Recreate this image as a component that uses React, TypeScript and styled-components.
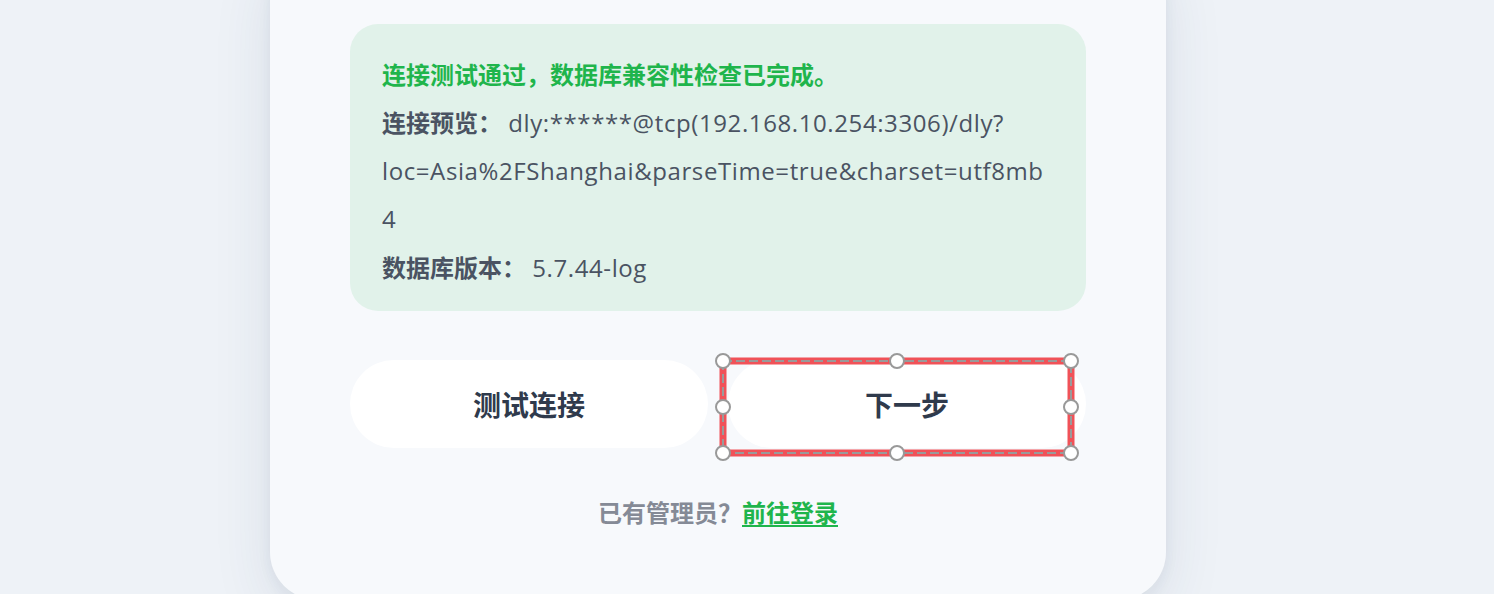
import React from "react";
import styled, { createGlobalStyle } from "styled-components";

const GlobalStyle = createGlobalStyle`
  :root {
    --page-bg: #eef2f7;
    --card-bg: #f7f9fc;
    --success-bg: #e1f2ea;
    --green: #1fb54c;
    --text: #4a5362;
    --heading: #2f3a4c;
    --muted: #858a96;
  }

  html, body {
    margin: 0;
    padding: 0;
    height: 100%;
    overflow: hidden;
    background: var(--page-bg);
  }

  body {
    font-family: "Open Sans", "Noto Sans CJK SC", sans-serif;
    color: var(--text);
  }
`;

const Page = styled.div`
  display: flex;
  justify-content: center;
  min-height: 100vh;
  padding-right: 58px;
`;

const Card = styled.div`
  position: relative;
  width: 896px;
  box-sizing: border-box;
  margin-top: -56px;
  padding: 80px 80px 72px;
  background: var(--card-bg);
  border-radius: 48px;
  box-shadow: 0 18px 60px rgba(40, 60, 100, 0.1), 0 4px 14px rgba(40, 60, 100, 0.06);
`;

const ResultBox = styled.div`
  background: var(--success-bg);
  border-radius: 28px;
  padding: 26px 32px 19px;
  font-size: 24px;
  line-height: 48px;
`;

const SuccessTitle = styled.div`
  color: var(--green);
  font-weight: 700;
  font-size: 24px;
  font-family: "Noto Sans CJK SC", sans-serif;
`;

const InfoRow = styled.div`
  overflow-wrap: anywhere;
`;

const Label = styled.span`
  font-family: "Noto Sans CJK SC", sans-serif;
  font-weight: 700;
  font-size: 24px;
`;

const Value = styled.span`
  font-family: "Open Sans", "Noto Sans CJK SC", sans-serif;
  font-size: 24px;
  letter-spacing: 0.6px;
`;

const Actions = styled.div`
  position: relative;
  display: grid;
  grid-template-columns: 1fr 1fr;
  gap: 20px;
  margin-top: 49px;
`;

const ActionButton = styled.button`
  height: 88px;
  border: none;
  border-radius: 44px;
  background: #ffffff;
  color: var(--heading);
  font-family: "Noto Sans CJK SC", sans-serif;
  font-size: 28px;
  font-weight: 700;
  cursor: pointer;
`;

const Selection = styled.svg`
  position: absolute;
  left: 363px;
  top: -9px;
  width: 368px;
  height: 112px;
  overflow: visible;
  pointer-events: none;
`;

const Footer = styled.p`
  margin: 48px 0 0;
  text-align: center;
  font-family: "Noto Sans CJK SC", sans-serif;
  font-size: 24px;
  line-height: 32px;
  font-weight: 700;
  color: var(--muted);
`;

const LoginLink = styled.a`
  color: var(--green);
  text-decoration: underline;
  text-underline-offset: 3px;
  cursor: pointer;
`;

const handles: [number, number][] = [
  [10, 10], [184, 10], [358, 10],
  [10, 56], [358, 56],
  [10, 102], [184, 102], [358, 102],
];

const SelectionFrame = () => (
  <Selection viewBox="0 0 368 112">
    <rect x={10} y={10} width={348} height={92} fill="none" stroke="#f05258" strokeWidth={7} />
    <rect x={10} y={10} width={348} height={92} fill="none" stroke="#9a9a9a" strokeWidth={2} strokeDasharray="9 4" />
    {handles.map(([cx, cy]) => (
      <circle key={`${cx}-${cy}`} cx={cx} cy={cy} r={7} fill="#ffffff" stroke="#999999" strokeWidth={2} />
    ))}
  </Selection>
);

const App = () => {
  return (
    <Page>
      <GlobalStyle />
      <Card>
        <ResultBox>
          <SuccessTitle>连接测试通过，数据库兼容性检查已完成。</SuccessTitle>
          <InfoRow>
            <Label>连接预览：</Label>{" "}
            <Value>
              dly:******@tcp(192.168.10.254:3306)/dly?<wbr />loc=Asia%2FShanghai&amp;parseTime=true&amp;charset=utf8mb4
            </Value>
          </InfoRow>
          <InfoRow>
            <Label>数据库版本：</Label>{" "}
            <Value>5.7.44-log</Value>
          </InfoRow>
        </ResultBox>
        <Actions>
          <ActionButton>测试连接</ActionButton>
          <ActionButton>下一步</ActionButton>
          <SelectionFrame />
        </Actions>
        <Footer>
          已有管理员？<LoginLink>前往登录</LoginLink>
        </Footer>
      </Card>
    </Page>
  );
};

export default App;
